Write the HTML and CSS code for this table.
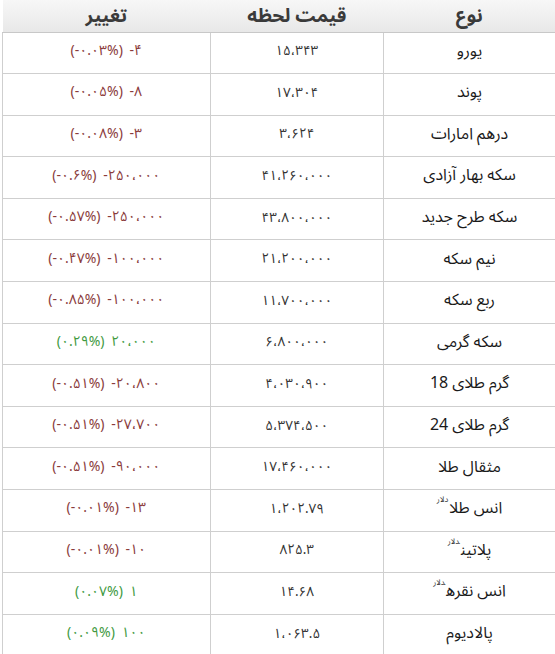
FILE: index.html
```html
<!DOCTYPE html>
<html lang="fa" dir="rtl">
<head>
<meta charset="utf-8">
<title>قیمت لحظه</title>
<link rel="stylesheet" href="styles.css">
</head>
<body>
<table class="rates">
  <colgroup>
    <col class="c-name">
    <col class="c-price">
    <col class="c-change">
  </colgroup>
  <thead>
    <tr><th>نوع</th><th>قیمت لحظه</th><th>تغییر</th></tr>
  </thead>
  <tbody>
    <tr><td class="name">یورو</td><td class="price"><span class="num">۱۵،۳۴۳</span></td><td class="chg down"><span class="num">(-۰.۰۳%) -۴</span></td></tr>
    <tr><td class="name">پوند</td><td class="price"><span class="num">۱۷،۳۰۴</span></td><td class="chg down"><span class="num">(-۰.۰۵%) -۸</span></td></tr>
    <tr><td class="name">درهم امارات</td><td class="price"><span class="num">۳،۶۲۴</span></td><td class="chg down"><span class="num">(-۰.۰۸%) -۳</span></td></tr>
    <tr><td class="name">سکه بهار آزادی</td><td class="price"><span class="num">۴۱،۲۶۰،۰۰۰</span></td><td class="chg down"><span class="num">(-۰.۶%) -۲۵۰،۰۰۰</span></td></tr>
    <tr><td class="name">سکه طرح جدید</td><td class="price"><span class="num">۴۳،۸۰۰،۰۰۰</span></td><td class="chg down"><span class="num">(-۰.۵۷%) -۲۵۰،۰۰۰</span></td></tr>
    <tr><td class="name">نیم سکه</td><td class="price"><span class="num">۲۱،۲۰۰،۰۰۰</span></td><td class="chg down"><span class="num">(-۰.۴۷%) -۱۰۰،۰۰۰</span></td></tr>
    <tr><td class="name">ربع سکه</td><td class="price"><span class="num">۱۱،۷۰۰،۰۰۰</span></td><td class="chg down"><span class="num">(-۰.۸۵%) -۱۰۰،۰۰۰</span></td></tr>
    <tr><td class="name">سکه گرمی</td><td class="price"><span class="num">۶،۸۰۰،۰۰۰</span></td><td class="chg up"><span class="num">(۰.۲۹%) ۲۰،۰۰۰</span></td></tr>
    <tr><td class="name">گرم طلای 18</td><td class="price"><span class="num">۴،۰۳۰،۹۰۰</span></td><td class="chg down"><span class="num">(-۰.۵۱%) -۲۰،۸۰۰</span></td></tr>
    <tr><td class="name">گرم طلای 24</td><td class="price"><span class="num">۵،۳۷۴،۵۰۰</span></td><td class="chg down"><span class="num">(-۰.۵۱%) -۲۷،۷۰۰</span></td></tr>
    <tr><td class="name">مثقال طلا</td><td class="price"><span class="num">۱۷،۴۶۰،۰۰۰</span></td><td class="chg down"><span class="num">(-۰.۵۱%) -۹۰،۰۰۰</span></td></tr>
    <tr><td class="name">انس طلا<sup class="unit">دلار</sup></td><td class="price"><span class="num">۱،۲۰۲.۷۹</span></td><td class="chg down"><span class="num">(-۰.۰۱%) -۱۳</span></td></tr>
    <tr><td class="name">پلاتین<sup class="unit">دلار</sup></td><td class="price"><span class="num">۸۲۵.۳</span></td><td class="chg down"><span class="num">(-۰.۰۱%) -۱۰</span></td></tr>
    <tr><td class="name">انس نقره<sup class="unit">دلار</sup></td><td class="price"><span class="num">۱۴.۶۸</span></td><td class="chg up"><span class="num">(۰.۰۷%) ۱</span></td></tr>
    <tr><td class="name">پالادیوم</td><td class="price"><span class="num">۱،۰۶۳.۵</span></td><td class="chg up"><span class="num">(۰.۰۹%) ۱۰۰</span></td></tr>
  </tbody>
</table>
</body>
</html>
```

FILE: styles.css
```css
html, body {
  margin: 0;
  padding: 0;
  background: #ffffff;
}

body {
  font-family: "Noto Sans Arabic", "DejaVu Sans", sans-serif;
  color: #222222;
  overflow: hidden;
}

.rates {
  direction: rtl;
  border-collapse: collapse;
  margin-left: 5px;
  width: 553px;
  table-layout: fixed;
}

.c-name { width: 171px; }
.c-price { width: 173px; }
.c-change { width: 207px; }

.rates th {
  height: 32px;
  padding: 2px 0 0;
  line-height: 1.2;
  font-size: 19px;
  font-weight: bold;
  color: #3a3a3a;
  background: linear-gradient(#f7f7f7, #e8e8e8);
  border: none;
  border-bottom: 1px solid #c8c8c8;
  text-align: center;
  vertical-align: middle;
  box-sizing: border-box;
}

.rates td {
  height: 37.6px;
  padding: 0 0 3px;
  line-height: 1.2;
  border: 1px solid #cfcfcf;
  text-align: center;
  vertical-align: middle;
}

.rates td.name {
  border-right: none;
  color: #1a1a1a;
  font-size: 16px;
}

.rates td.price {
  color: #333333;
  font-size: 13.5px;
  letter-spacing: 0.3px;
}

.rates td.chg {
  font-size: 14px;
  word-spacing: 3px;
}

.num {
  direction: ltr;
  unicode-bidi: isolate;
  display: inline-block;
}

.down { color: #8a3b3b; }
.up { color: #3f9a3f; }

.unit {
  font-size: 8px;
  vertical-align: 11px;
  line-height: 0;
  color: #333333;
  margin-right: 1px;
}
```
